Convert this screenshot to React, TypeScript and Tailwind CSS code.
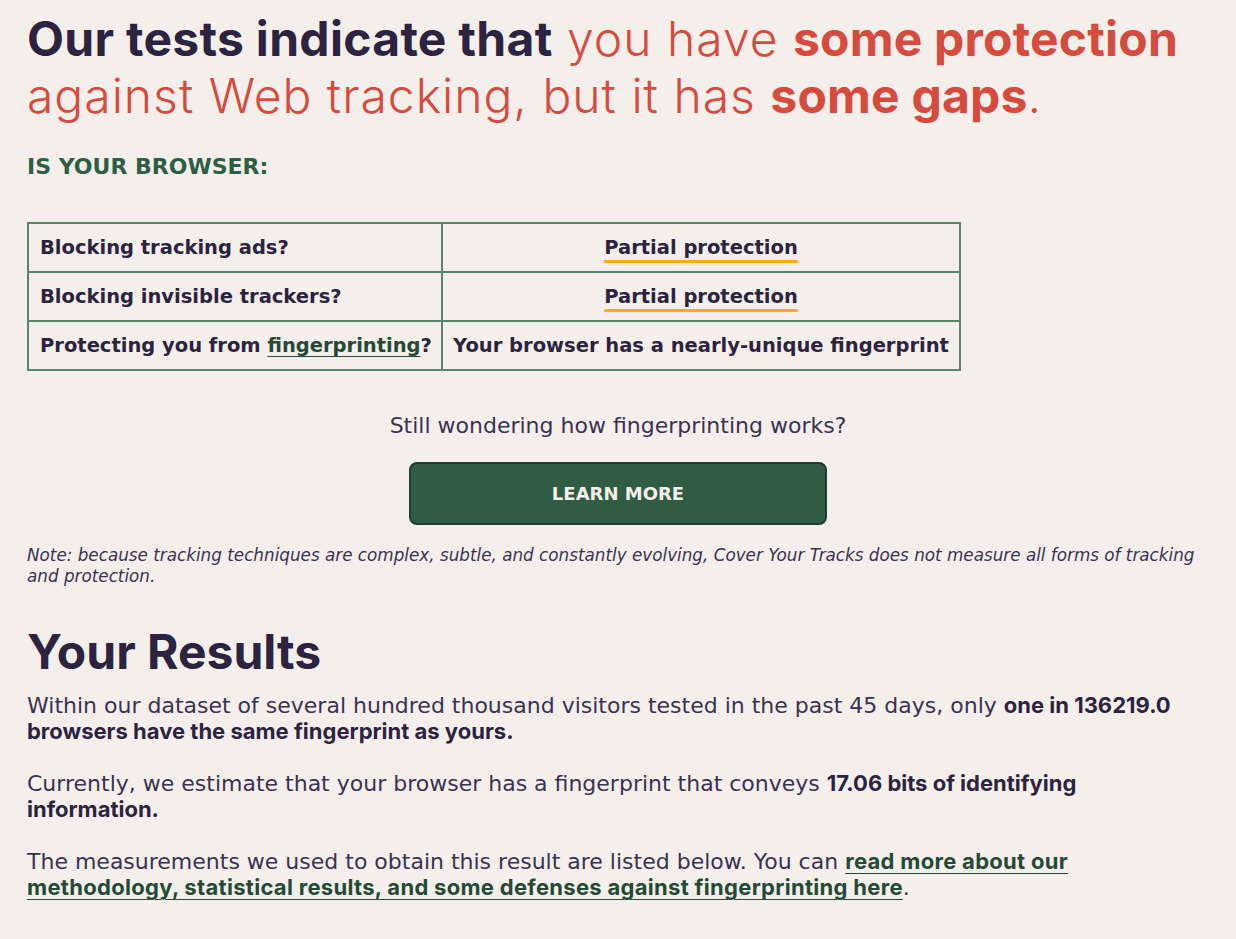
export default function App() {
  const rows = [
    { q: "Blocking tracking ads?", a: "Partial protection", partial: true },
    { q: "Blocking invisible trackers?", a: "Partial protection", partial: true },
    { q: "fingerprint", a: "Your browser has a nearly-unique fingerprint", partial: false },
  ]

  return (
    <div className="min-h-screen bg-[#f4efeb] text-[#2c2340] font-['DejaVu_Sans',sans-serif]">
      <div className="px-[27px] pt-[10px] pb-10">
        <h1 className="font-['Inter',sans-serif] text-[48px] leading-[57px] tracking-[1px] text-[#d64b3d] font-light">
          <span className="font-bold tracking-[0.3px] text-[#2c2340]">Our tests indicate that</span> you have{" "}
          <span className="font-bold tracking-[0.2px]">some protection</span> against Web tracking, but it has{" "}
          <span className="font-bold tracking-[0.2px]">some gaps</span>.
        </h1>

        <h2 className="mt-[29px] text-[22px] leading-[28px] font-bold uppercase text-[#2e5e44]">Is your browser:</h2>

        <table className="mt-[41px] w-[934px] table-fixed border-collapse border-2 border-[#56876a] text-[19.5px] font-bold">
          <tbody>
            {rows.map((r, i) => (
              <tr key={i} className="h-[49px]">
                <td className="w-[414px] whitespace-nowrap border-2 border-[#56876a] px-[11px]">
                  {r.partial ? (
                    r.q
                  ) : (
                    <>
                      Protecting you from{" "}
                      <a href="#" className="text-[#244a35] underline decoration-1 underline-offset-4">
                        fingerprinting
                      </a>
                      ?
                    </>
                  )}
                </td>
                <td className="whitespace-nowrap border-2 border-[#56876a] px-[8px] text-center">
                  {r.partial ? (
                    <span className="underline decoration-[#f5ad0f] decoration-[3px] underline-offset-[6px]">
                      {r.a}
                    </span>
                  ) : (
                    r.a
                  )}
                </td>
              </tr>
            ))}
          </tbody>
        </table>

        <p className="mt-[41px] text-center text-[22px] leading-[28px] text-[#3a3252]">
          Still wondering how fingerprinting works?
        </p>

        <div className="mt-[22px] flex justify-center">
          <button className="w-[418px] h-[63px] rounded-[8px] border-2 border-[#1f3d2c] bg-[#2f5c42] text-[18px] font-bold text-[#f4efeb]">
            LEARN MORE
          </button>
        </div>

        <p className="mt-[20px] text-[16.8px] leading-[21px] italic text-[#3a3252]">
          Note: because tracking techniques are complex, subtle, and constantly evolving, Cover Your Tracks does not
          measure all forms of tracking and protection.
        </p>

        <h2 className="mt-[36px] font-['Inter',sans-serif] text-[48px] leading-[57px] font-bold">Your Results</h2>

        <div className="mt-[13px] text-[22px] leading-[26px] text-[#3a3252] space-y-[26px]">
          <p>
            Within our dataset of several hundred thousand visitors tested in the past 45 days, only{" "}
            <b className="font-['Inter',sans-serif] leading-[0] text-[#2c2340]">
              one in 136219.0 browsers have the same fingerprint as yours.
            </b>
          </p>
          <p>
            Currently, we estimate that your browser has a fingerprint that conveys{" "}
            <b className="font-['Inter',sans-serif] leading-[0] text-[#2c2340]">
              17.06 bits of identifying information.
            </b>
          </p>
          <p>
            The measurements we used to obtain this result are listed below. You can{" "}
            <a
              href="#"
              className="font-['Inter',sans-serif] font-bold leading-[0] tracking-[0.3px] text-[#244a35] underline decoration-1 underline-offset-4"
            >
              read more about our methodology, statistical results, and some defenses against fingerprinting here
            </a>
            .
          </p>
        </div>
      </div>
    </div>
  )
}
